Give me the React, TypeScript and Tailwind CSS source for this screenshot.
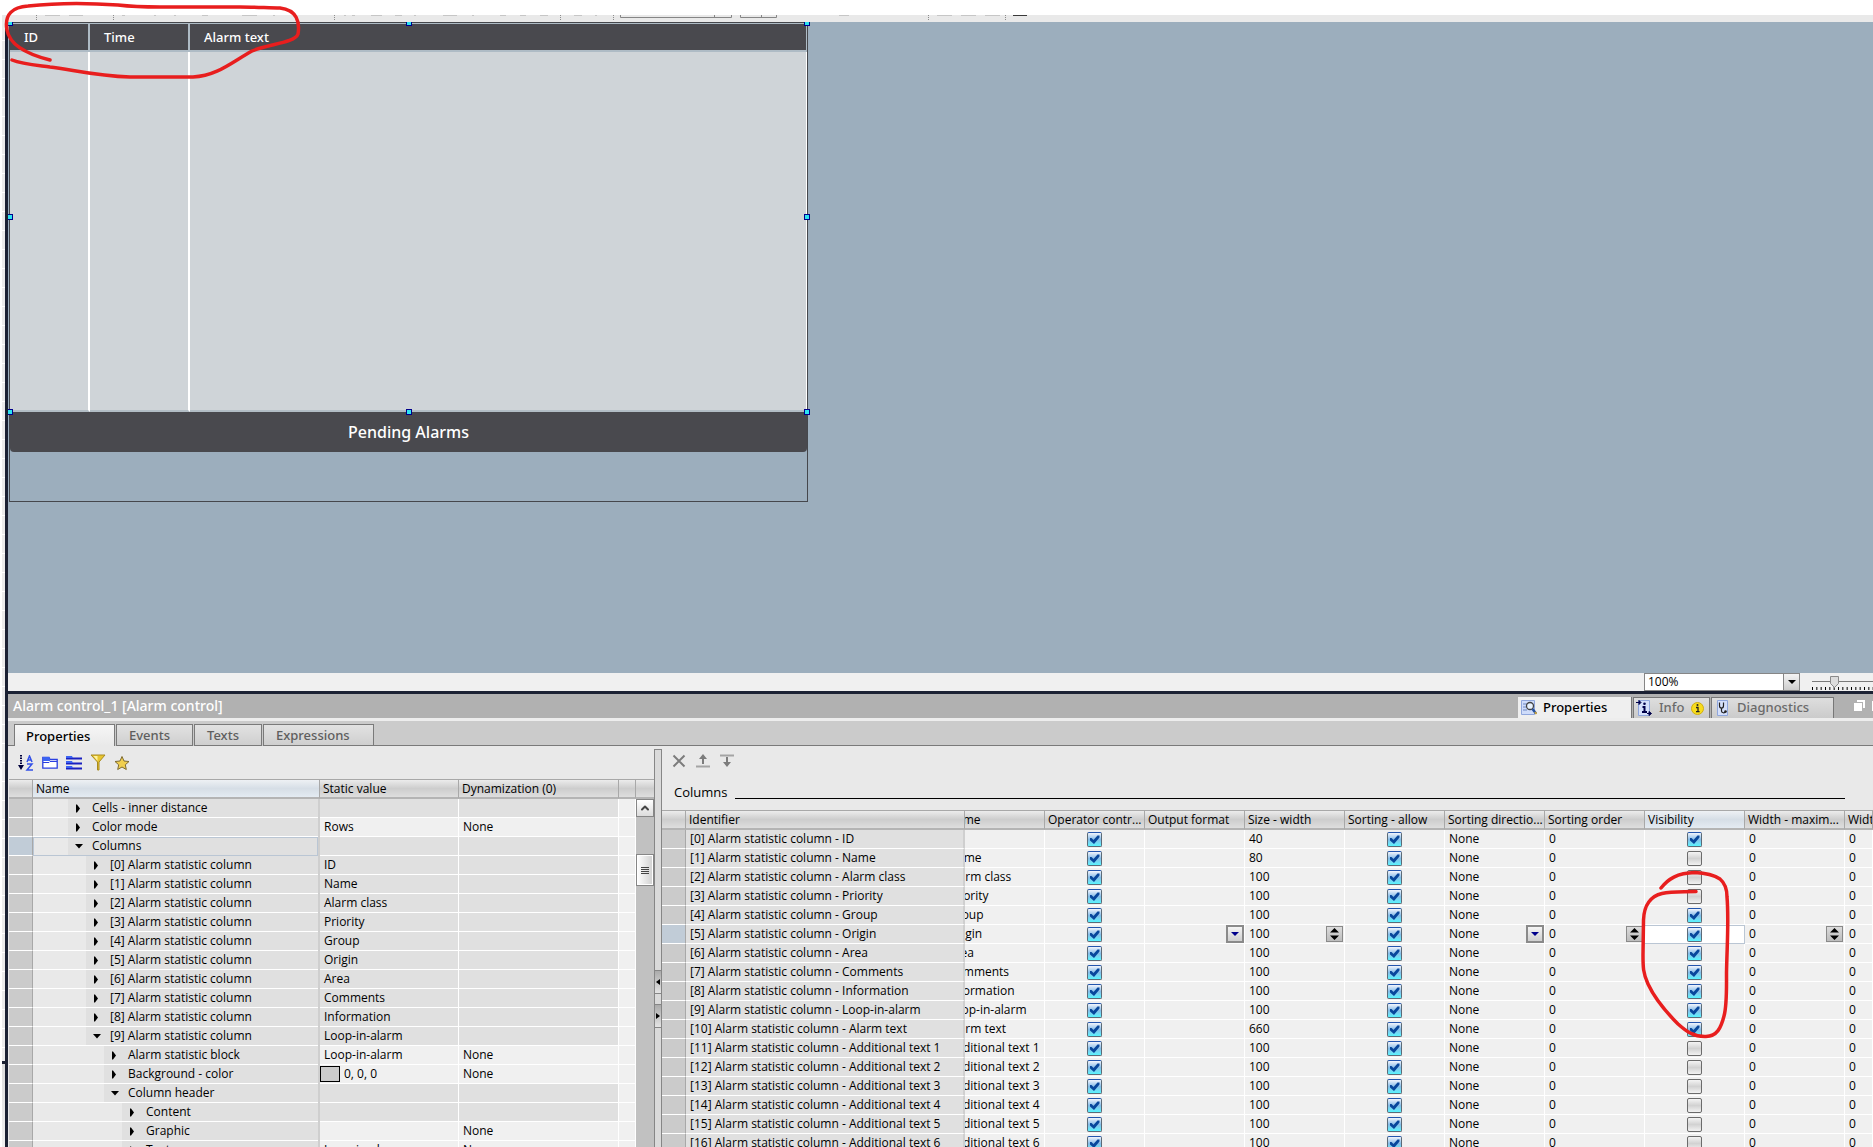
import { ChevronUp } from 'lucide-react';

type TreeRow = {
  level: number;
  name: string;
  value?: string;
  dynamic?: string;
  open?: boolean;
  editable?: boolean;
  selected?: boolean;
  swatch?: boolean;
};

const columnNames = [
  'ID', 'Name', 'Alarm class', 'Priority', 'Group', 'Origin', 'Area', 'Comments', 'Information', 'Loop-in-alarm', 'Alarm text',
  'Additional text 1', 'Additional text 2', 'Additional text 3', 'Additional text 4', 'Additional text 5', 'Additional text 6',
];

const treeRows: TreeRow[] = [
  { level: 0, name: 'Cells - inner distance' },
  { level: 0, name: 'Color mode', value: 'Rows', dynamic: 'None', editable: true },
  { level: 0, name: 'Columns', open: true, selected: true },
  ...columnNames.slice(0, 10).map((value, i) => ({
    level: 1,
    name: `[${i}] Alarm statistic column`,
    value,
    open: i === 9,
  })),
  { level: 2, name: 'Alarm statistic block', value: 'Loop-in-alarm', dynamic: 'None', editable: true },
  { level: 2, name: 'Background - color', value: '0, 0, 0', dynamic: 'None', editable: true, swatch: true },
  { level: 2, name: 'Column header', open: true },
  { level: 3, name: 'Content' },
  { level: 3, name: 'Graphic', dynamic: 'None', editable: true },
  { level: 3, name: 'Text', value: 'Loop-in-alarm', dynamic: 'None', editable: true },
];

const widths = ['40', '80', '100', '100', '100', '100', '100', '100', '100', '100', '660', '100', '100', '100', '100', '100', '100'];
const visible = [0, 4, 5, 6, 7, 8, 9, 10];
const activeRow = 5;

const indent = ['w-[35px]', 'w-[53px]', 'w-[71px]', 'w-[89px]'];

const head =
  'h-[20px] overflow-hidden whitespace-nowrap border-t border-b-2 border-r border-t-[#a8a8a8] border-b-[#b4b4b4] border-r-[#a8a8a8] bg-linear-to-b from-[#ececec] via-[#cdcdcd] to-[#dedede] pl-[3px] text-left font-normal leading-[17px]';
const headActive =
  'h-[20px] overflow-hidden whitespace-nowrap border-t border-b-2 border-r border-t-[#a8a8a8] border-b-[#b4b4b4] border-r-[#a8a8a8] bg-linear-to-b from-[#eef1f4] via-[#d6dee6] to-[#e4ebf2] pl-[3px] text-left font-normal leading-[17px]';
const cell = 'h-[19px] overflow-hidden whitespace-nowrap border-b border-r border-white bg-[#f0f0f0] pl-1 leading-[18px]';
const checkCell = 'h-[19px] border-b border-r border-white bg-[#f0f0f0] p-0';
const gutter = 'h-[19px] border-b border-r border-b-white border-r-[#a8a8a8] bg-[#cbcbcb]';
const gutterActive = 'h-[19px] border-b border-r border-b-white border-r-[#a8a8a8] bg-[#c1ccd7]';

function Expander({ open }: { open?: boolean }) {
  return (
    <svg viewBox="0 0 8 9" className="h-[9px] w-2">
      <path d={open ? 'M0 2h8L4 6.5z' : 'M1 0.5v8h1L5 4.5 2 .5z'} />
    </svg>
  );
}

function Check({ checked, label }: { checked: boolean; label: string }) {
  return (
    <label className="relative mx-auto block h-[15px] w-[15px]">
      <input
        type="checkbox"
        aria-label={label}
        defaultChecked={checked}
        className="peer block h-[15px] w-[15px] appearance-none rounded-[2px] border border-[#6b6b6b] bg-linear-to-b from-[#f4f4f4] via-[#d2d2d2] to-[#f2f2f2] checked:border-[#5b6b78] checked:border-t-[#2355ad] checked:from-[#f2f5fd] checked:via-[#86bce8] checked:to-[#55f5ff]"
      />
      <svg viewBox="0 0 15 15" className="pointer-events-none absolute inset-0 hidden h-[15px] w-[15px] peer-checked:block">
        <path d="M3 6h1.500L6.500 8 10.500 3.500H12.500V5.500L7 12 3 8.500z" fill="#08479c" />
      </svg>
    </label>
  );
}

function DropButton({ label }: { label: string }) {
  return (
    <button aria-label={label} className="flex h-[18px] w-[18px] shrink-0 items-center justify-center border-2 border-[#8a8a8a] bg-linear-to-b from-[#f4f4f4] to-[#cfcfcf]">
      <svg viewBox="0 0 8 4" className="h-1 w-2">
        <path d="M0 0h8L4 4z" fill="#00008b" />
      </svg>
    </button>
  );
}

function Spinner({ label }: { label: string }) {
  return (
    <button aria-label={label} className="flex h-4 w-[17px] shrink-0 items-center justify-center border border-[#8a8a8a] bg-linear-to-b from-[#dcdcdc] to-[#bcbcbc]">
      <svg viewBox="0 0 9 12" className="h-3 w-[9px]">
        <path d="M0 4.500L4.500 0 9 4.500zM0 7.500h9L4.500 12z" />
      </svg>
    </button>
  );
}

function Handle({ place }: { place: string }) {
  return <span className={`absolute h-[6px] w-[6px] -translate-x-1/2 -translate-y-1/2 border border-[#00008b] bg-[#2be4f0] ${place}`} />;
}

function ToolbarEdge() {
  const dots = [36, 113, 334, 560, 613, 928, 1005];
  const dashes = [
    [45, 15], [69, 14], [122, 3], [154, 2], [174, 2], [202, 6], [242, 15], [273, 2], [344, 2], [352, 3], [371, 11], [395, 7],
    [414, 2], [443, 14], [472, 2], [500, 6], [520, 6], [540, 8], [574, 8], [595, 2], [839, 10], [937, 15], [961, 15], [985, 15],
  ];
  return (
    <svg className="ml-[2px] block h-[7px] w-full bg-[#e9e9e9]">
      <g transform="translate(-2 0)">
        {dots.map((x) => (
          <path key={x} d={`M${x}.5 0v6`} stroke="#8c8c8c" strokeDasharray="1 1" />
        ))}
        {dashes.map(([x, w]) => (
          <path key={x} d={`M${x} .5h${w}`} stroke="#c6c6c6" />
        ))}
        <path d="M620.500 0v2.500h111V0M714.500 0v2M740.500 0v2.500h36V0M761.500 0v2" fill="none" stroke="#868686" />
        <path d="M1013 .5h14" stroke="#3a3a3a" />
      </g>
    </svg>
  );
}

function AlarmControl() {
  return (
    <div className="relative ml-px h-[480px] w-[799px] border border-[#45474c]">
      <table className="w-full table-fixed border-separate border-spacing-0 font-['Noto_Sans'] text-[13px] text-white">
        <colgroup>
          <col className="w-[80px]" />
          <col className="w-[100px]" />
          <col />
        </colgroup>
        <thead>
          <tr>
            {['ID', 'Time', 'Alarm text'].map((title) => (
              <th
                key={title}
                className="h-[29px] border-t border-r-2 border-b-2 border-[#aebbc5] bg-[#49494e] pl-[14px] text-left leading-5 font-medium last:border-r"
              >
                {title}
              </th>
            ))}
          </tr>
        </thead>
        <tbody>
          <tr>
            <td className="h-[360px] border-r-2 border-b-2 border-r-white border-b-[#b2bdc5] bg-[#cfd4d8]" />
            <td className="border-r-2 border-b-2 border-r-white border-b-[#b2bdc5] bg-[#cfd4d8]" />
            <td className="border-r border-b-2 border-r-white border-b-[#b2bdc5] bg-[#cfd4d8]" />
          </tr>
        </tbody>
      </table>
      <div className="flex h-10 items-center justify-center rounded-b bg-[#49494e] pb-px font-['Noto_Sans'] text-[16px] font-medium text-white">
        Pending Alarms
      </div>
      <Handle place="left-0 top-0" />
      <Handle place="left-1/2 top-0" />
      <Handle place="left-full top-0" />
      <Handle place="left-0 top-[194px]" />
      <Handle place="left-full top-[194px]" />
      <Handle place="left-0 top-[389px]" />
      <Handle place="left-1/2 top-[389px]" />
      <Handle place="left-full top-[389px]" />
    </div>
  );
}

function StatusRow() {
  return (
    <div className="flex h-[18px] shrink-0 items-center justify-end bg-[#f0f0f0]">
      <div className="relative mr-3 h-[18px] w-[156px]">
        <select aria-label="Zoom" className="block h-[18px] w-full appearance-none border border-[#868686] bg-white pl-[3px] text-[12px] leading-4">
          <option>100%</option>
        </select>
        <span className="pointer-events-none absolute top-0 right-0 flex h-[18px] w-[17px] items-center justify-center border border-[#868686] bg-linear-to-b from-[#f4f4f4] to-[#cdcdcd]">
          <svg viewBox="0 0 8 4" className="h-1 w-2">
            <path d="M0 0h8L4 4z" />
          </svg>
        </span>
      </div>
      <svg viewBox="0 0 61 18" className="h-[18px] w-[61px]">
        <path d="M0 8.500h61" stroke="#7a7a7a" />
        <path d="M0 15.500h61" stroke="#000" strokeWidth="3" strokeDasharray="1 3.333" />
        <path d="M18.500 3.500h8v7l-4 4-4-4z" fill="#dcdcdc" stroke="#8a8a8a" />
      </svg>
    </div>
  );
}

function TitleBar() {
  return (
    <div className="flex h-6 shrink-0 items-end bg-[#b1b1b1] font-['Noto_Sans'] text-[13px]">
      <h1 className="flex-1 self-center pl-[5px] text-[14px] leading-6 font-medium text-white">Alarm control_1 [Alarm control]</h1>
      <div className="flex gap-px pr-5 text-[#6a6a6a]">
        <button className="flex h-[21px] w-[114px] items-center gap-[6px] border-r border-r-[#777] bg-[#efefef] pl-[3px] font-medium text-black">
          <svg viewBox="0 0 16 16" className="h-4 w-4">
            <path d="M.5.5h13v14H.5z" fill="#cfdcfa" stroke="#8fa6dc" />
            <path d="M2 4h4M2 7h3M2 10h4" stroke="#6d86c0" />
            <circle cx="9" cy="6" r="3.500" fill="#e8f2ff" stroke="#444" strokeWidth="1.300" />
            <path d="M11.500 9l3.500 4.500" stroke="#2350a0" strokeWidth="2.500" />
            <path d="M14 12l1.500 2" stroke="#caa23a" strokeWidth="2" />
          </svg>
          Properties
        </button>
        <button className="flex h-[21px] w-[77px] items-center gap-[7px] border-x border-t border-[#777] bg-linear-to-b from-[#dedede] to-[#cbcbcb] pl-[2px] font-medium">
          <svg viewBox="0 0 16 16" className="h-4 w-4">
            <path d="M2.500.5h11v15h-11z" fill="#d5e0fb" stroke="#8fa6dc" />
            <path d="M0 2.500h4M3 .5v4l2-2zM11 13.500h3M13 11.500v4l2.500-2z" fill="#00004a" stroke="#00004a" />
            <path d="M6.500 7h2v5M6 12h5" fill="none" stroke="#00004a" strokeWidth="2" />
            <circle cx="8.500" cy="3.800" r="1.300" fill="#00004a" />
          </svg>
          Info
          <svg viewBox="0 0 13 13" className="h-[13px] w-[13px]">
            <circle cx="6.500" cy="6.500" r="6" fill="#f8dc1c" stroke="#cfae10" />
            <path d="M5 5.500h2v4M5 9.700h3.600" fill="none" stroke="#222" strokeWidth="1.300" />
            <circle cx="6.500" cy="3" r="1" fill="#222" />
          </svg>
        </button>
        <button className="flex h-[21px] w-[123px] items-center gap-[7px] border-x border-t border-[#777] bg-linear-to-b from-[#dedede] to-[#cbcbcb] pl-1 font-medium">
          <svg viewBox="0 0 14 16" className="h-4 w-[14px]">
            <path d="M1.500.5h10v15h-10z" fill="#d5e0fb" stroke="#8fa6dc" />
            <path d="M3.500 2.500v3c0 3.500 4 3.500 4 0v-3M5.500 8v3c0 2 3 2.500 4.500.500" fill="none" stroke="#222" strokeWidth="1.200" />
            <circle cx="9.500" cy="11.500" r="1.300" fill="#222" />
          </svg>
          Diagnostics
        </button>
      </div>
      <svg viewBox="0 0 19 12" className="mb-[6px] h-3 w-[19px]">
        <path d="M3 0h8v8H9V2H3zM0 3h8v8H0z" fill="#fff" />
        <path d="M18 1h1v10h-1z" fill="#fff" />
      </svg>
    </div>
  );
}

function TabStrip() {
  const tab =
    'h-[22px] border-x border-t border-b border-[#7a7a7a] bg-linear-to-b from-[#e2e2e2] to-[#cfcfcf] pl-3 text-left font-medium text-[#5e5e5e]';
  return (
    <nav className="flex h-7 shrink-0 items-end border-t-3 border-t-[#ededed] bg-[#cbcbcb] font-['Noto_Sans'] text-[13px] leading-5">
      <span className="h-full w-[6px] border-b border-[#7a7a7a]" />
      <button className="h-[22px] w-[101px] border-x border-t border-[#7a7a7a] bg-linear-to-b from-[#f6f6f6] to-[#e9e9e9] pl-[11px] text-left font-medium text-black">
        Properties
      </button>
      <button className={`${tab} ml-px w-[77px]`}>Events</button>
      <button className={`${tab} ml-px w-[68px]`}>Texts</button>
      <button className={`${tab} ml-px w-[111px]`}>Expressions</button>
      <span className="h-full flex-1 border-b border-[#7a7a7a]" />
    </nav>
  );
}

function PropertyToolbar() {
  return (
    <div className="flex h-[33px] items-center gap-2 pl-[10px]">
      <button aria-label="Sort alphabetically">
        <svg viewBox="0 0 16 16" className="h-4 w-4">
          <path d="M3 0v10" stroke="#00003c" strokeWidth="2" strokeDasharray="1.500 1" />
          <path d="M0 10h6l-3 5z" fill="#00003c" />
          <path d="M9 7l2.500-6L14 7M10 5h3M9 9h5l-5 6h6" fill="none" stroke="#3350e8" strokeWidth="1.500" />
        </svg>
      </button>
      <button aria-label="Show categories">
        <svg viewBox="0 0 16 16" className="h-4 w-4">
          <path d="M.8 13.200V2.500H7l1 2h7.200v8.700z" fill="#fff" stroke="#2a3fe0" strokeWidth="1.300" />
          <path d="M1 2h6l1 2v2H1z" fill="#3b63f2" />
          <path d="M1 7.500h6l1-1h7" fill="none" stroke="#2a3fe0" />
        </svg>
      </button>
      <button aria-label="Show list">
        <svg viewBox="0 0 16 16" className="h-4 w-4">
          <path d="M0 3.500h16M0 8.500h16M0 13.500h16" stroke="#1a20c0" strokeWidth="2" />
          <path d="M0 1h6l1 2H0zM0 6h6l1 2H0zM0 11h6l1 2H0z" fill="#3b63f2" />
        </svg>
      </button>
      <button aria-label="Filter">
        <svg viewBox="0 0 16 18" className="h-[18px] w-4">
          <path d="M1 1h14L9 8v8H7.500V8z" fill="#e9c62e" stroke="#a88a20" />
          <path d="M3.500 2l4 5V2z" fill="#fff3a0" />
        </svg>
      </button>
      <button aria-label="Favorites">
        <svg viewBox="0 0 16 16" className="h-4 w-4">
          <path d="M8 1.500l2 4.500 5 .5-3.700 3.300 1 4.700L8 12l-4.300 2.500 1-4.700L1 6.500 6 6z" fill="#f0cf50" stroke="#7d6a30" />
        </svg>
      </button>
    </div>
  );
}

function PropertyTree() {
  return (
    <section className="flex w-[646px] shrink-0 flex-col">
      <PropertyToolbar />
      <div className="flex min-h-0 flex-1 overflow-hidden pl-px">
        <table className="w-[627px] shrink-0 table-fixed border-separate border-spacing-0 self-start">
          <colgroup>
            <col className="w-[24px]" />
            <col className="w-[287px]" />
            <col className="w-[139px]" />
            <col className="w-[160px]" />
            <col className="w-[17px]" />
          </colgroup>
          <thead>
            <tr>
              <th className={head} />
              <th className={headActive}>Name</th>
              <th className={head}>Static value</th>
              <th className={head}>Dynamization (0)</th>
              <th className={head} />
            </tr>
          </thead>
          <tbody>
            {treeRows.map((row) => {
              const tone = row.editable ? cell : `${cell} bg-[#e0e0e0]!`;
              return (
                <tr key={row.name}>
                  <td className={row.selected ? gutterActive : gutter} />
                  <td className="h-[19px] border-r-2 border-r-[#cfcfcf] p-0">
                    <div
                      className={
                        row.selected
                          ? 'flex h-[19px] border-b border-white bg-[#e9e9e9] outline-1 -outline-offset-1 outline-[#bac6d4]'
                          : 'flex h-[19px] border-b border-white bg-[#e9e9e9]'
                      }
                    >
                      <span className={`${indent[row.level]} shrink-0`} />
                      <span className="flex flex-1 items-center bg-[#e0e0e0] pl-[7px] whitespace-nowrap">
                        <Expander open={row.open} />
                        <span className="pl-[9px] leading-[18px]">{row.name}</span>
                      </span>
                    </div>
                  </td>
                  <td className={tone}>
                    {row.swatch ? (
                      <span className="-ml-1 flex items-center gap-1">
                        <span className="h-4 w-5 border border-black bg-[#cbcbcb]" />
                        {row.value}
                      </span>
                    ) : (
                      row.value
                    )}
                  </td>
                  <td className={tone}>{row.dynamic}</td>
                  <td className={cell} />
                </tr>
              );
            })}
          </tbody>
        </table>
        <div className="flex flex-1 flex-col bg-[#c1c1c1]">
          <div className="h-[20px] border-t border-b-2 border-t-[#a8a8a8] border-b-[#b4b4b4] bg-linear-to-b from-[#ececec] via-[#cdcdcd] to-[#dedede]" />
          <button aria-label="Scroll up" className="flex h-[18px] items-center justify-center border border-[#868686] bg-linear-to-b from-white to-[#dcdcdc]">
            <ChevronUp className="h-3 w-3 text-[#444]" strokeWidth={4} />
          </button>
          <button aria-label="Scroll position" className="mt-[37px] flex h-8 flex-col items-center justify-center gap-px border border-[#868686] bg-linear-to-r from-white to-[#d0d0d0] outline-1 -outline-offset-2 outline-white">
            <span className="h-px w-2 bg-[#444]" />
            <span className="h-px w-2 bg-[#444]" />
            <span className="h-px w-2 bg-[#444]" />
            <span className="h-px w-2 bg-[#444]" />
          </button>
        </div>
      </div>
    </section>
  );
}

function Splitter() {
  return (
    <div className="mt-[3px] w-2 shrink-0 border-x border-t border-[#868686] bg-[#dadada] pt-[220px]">
      <button aria-label="Collapse left" className="flex h-6 w-full items-center justify-center border-y border-[#868686] bg-linear-to-b from-[#ababab] to-[#e4e4e4]">
        <svg viewBox="0 0 4 6" className="h-[6px] w-1">
          <path d="M4 0v6L0 3z" />
        </svg>
      </button>
      <button aria-label="Collapse right" className="mt-[10px] flex h-6 w-full items-center justify-center border-y border-[#868686] bg-linear-to-b from-[#ababab] to-[#e4e4e4]">
        <svg viewBox="0 0 4 6" className="h-[6px] w-1">
          <path d="M0 0v6l4-3z" />
        </svg>
      </button>
    </div>
  );
}

function ColumnsEditor() {
  return (
    <section className="min-w-0 flex-1">
      <div className="flex h-[30px] items-center gap-2 pl-[10px]">
        <button aria-label="Delete">
          <svg viewBox="0 0 14 14" className="h-[14px] w-[14px]">
            <path d="M1.500 1.500l11 11M12.500 1.500l-11 11" stroke="#7c7c7c" strokeWidth="2" />
          </svg>
        </button>
        <button aria-label="Move up" className="ml-[2px]">
          <svg viewBox="0 0 14 14" className="h-[14px] w-[14px]">
            <path d="M0 12.500h14" stroke="#a4a4a4" strokeWidth="2" />
            <path d="M3 5l4-5 4 5H8v5H6V5z" fill="#7c7c7c" />
          </svg>
        </button>
        <button aria-label="Move down" className="ml-[2px]">
          <svg viewBox="0 0 14 14" className="h-[14px] w-[14px]">
            <path d="M0 1.500h14" stroke="#a4a4a4" strokeWidth="2" />
            <path d="M3 8l4 5 4-5H8V3H6v5z" fill="#7c7c7c" />
          </svg>
        </button>
      </div>
      <div className="flex h-[34px] gap-2 pr-7 pl-3">
        <h2 className="pt-[6px] text-[13px] leading-5">Columns</h2>
        <span className="h-[23px] flex-1 border-b border-black" />
      </div>
      <div className="relative">
        <table className="w-full table-fixed border-separate border-spacing-0">
          <colgroup>
            <col className="w-[24px]" />
            <col className="w-[279px]" />
            <col className="w-[80px]" />
            <col className="w-[100px]" />
            <col className="w-[100px]" />
            <col className="w-[100px]" />
            <col className="w-[100px]" />
            <col className="w-[100px]" />
            <col className="w-[100px]" />
            <col className="w-[100px]" />
            <col className="w-[100px]" />
            <col />
          </colgroup>
          <thead>
            <tr>
              <th className={head} />
              <th className={head}>Identifier</th>
              <th className={head}>
                <span className="-ml-[3px] flex justify-end overflow-hidden">
                  <span className="w-[97px] shrink-0">Name</span>
                </span>
              </th>
              <th className={head}>Operator contr...</th>
              <th className={head}>Output format</th>
              <th className={head}>Size - width</th>
              <th className={head}>Sorting - allow</th>
              <th className={head}>Sorting directio...</th>
              <th className={head}>Sorting order</th>
              <th className={headActive}>Visibility</th>
              <th className={head}>Width - maxim...</th>
              <th className={head}>Width</th>
            </tr>
          </thead>
          <tbody>
            {columnNames.map((name, i) => {
              const active = i === activeRow;
              return (
                <tr key={name}>
                  <td className={active ? gutterActive : gutter} />
                  <td className="h-[19px] border-r-2 border-b border-r-[#cfcfcf] border-b-white bg-[#e0e0e0] pl-1 leading-[18px] whitespace-nowrap">
                    [{i}] Alarm statistic column - {name}
                  </td>
                  <td className="h-[19px] border-r border-b border-white bg-[#f0f0f0] p-0 leading-[18px] whitespace-nowrap">
                    <span className="flex justify-end overflow-hidden">
                      <span className="w-[96px] shrink-0">{i > 0 && name}</span>
                    </span>
                  </td>
                  <td className={checkCell}>
                    <Check checked label={`Operator control ${name}`} />
                  </td>
                  <td className={cell}>
                    {active && (
                      <span className="flex justify-end">
                        <DropButton label="Output format" />
                      </span>
                    )}
                  </td>
                  <td className={cell}>
                    <span className="flex items-center justify-between pr-px">
                      {widths[i]}
                      {active && <Spinner label="Size - width" />}
                    </span>
                  </td>
                  <td className={checkCell}>
                    <Check checked label={`Sorting allow ${name}`} />
                  </td>
                  <td className={cell}>
                    <span className="flex items-center justify-between">
                      None
                      {active && <DropButton label="Sorting direction" />}
                    </span>
                  </td>
                  <td className={cell}>
                    <span className="flex items-center justify-between pr-px">
                      0
                      {active && <Spinner label="Sorting order" />}
                    </span>
                  </td>
                  <td className={active ? 'h-[19px] border border-l-0 border-[#bac6d4] bg-white p-0' : checkCell}>
                    <Check checked={visible.includes(i)} label={`Visibility ${name}`} />
                  </td>
                  <td className={cell}>
                    <span className="flex items-center justify-between pr-px">
                      0
                      {active && <Spinner label="Width - maximum" />}
                    </span>
                  </td>
                  <td className={cell}>0</td>
                </tr>
              );
            })}
          </tbody>
        </table>
        <svg viewBox="1638 868 96 174" className="pointer-events-none absolute top-[58px] left-[976px] h-[174px] w-24">
          <path
            d="M1661 888C1668 879 1677 873 1695 872.500C1706 873 1714 875 1720 879C1726 884 1727 890 1727 897C1729 920 1727 945 1726.500 973C1726.500 990 1727 1005 1724 1016C1721 1028 1717 1036 1706 1036.500C1694 1037 1687 1032 1678 1024C1668 1014 1655 999 1648 984C1643 973 1643 967 1643 955L1643.500 920C1644 905 1651 896 1662 893.500C1672 891 1682 892 1696 891.500"
            fill="none"
            stroke="#e81e1e"
            strokeWidth="3.500"
            strokeLinecap="round"
          />
        </svg>
      </div>
    </section>
  );
}

export default function App() {
  return (
    <div className="relative flex h-screen flex-col overflow-hidden bg-white pt-[15px] font-['Open_Sans',sans-serif] text-[12px] text-black">
      <ToolbarEdge />
      <div className="flex min-h-0 flex-1">
        <div className="ml-[2px] flex w-[3px] shrink-0 flex-col">
          <div className="flex-1 bg-[repeating-linear-gradient(#ebebeb_0_18px,#ffffff_18px_19px)]" />
          <div className="h-[86px] border-t-3 border-t-[#1b2133] bg-linear-to-b from-[#dcdcdc] to-[#f0f0f0]" />
        </div>
        <div className="w-[3px] shrink-0 bg-[#1b2133]" />
        <main className="flex min-w-0 flex-1 flex-col">
          <div className="min-h-0 flex-1 overflow-hidden bg-[#9caebd]">
            <AlarmControl />
          </div>
          <StatusRow />
          <div className="flex h-[456px] shrink-0 flex-col border-t-3 border-t-[#1b2133] bg-[#e9e9e9]">
            <TitleBar />
            <TabStrip />
            <div className="flex min-h-0 flex-1 overflow-hidden">
              <PropertyTree />
              <Splitter />
              <ColumnsEditor />
            </div>
          </div>
        </main>
      </div>
      <svg viewBox="0 0 310 90" className="pointer-events-none absolute top-0 left-0 h-[90px] w-[310px]">
        <path
          d="M50 60C30 55 10 47 7 30C4 14 13 7 28 6C55 3 90 3 118 5C135 7 145 7 160 7L240 7C255 7 270 8 280 8C297 10 300 22 298 34C295 43 268 44 252 51C232 62 217 76 193 77L130 77C95 76 70 69 50 67C35 65 22 64 12 60"
          fill="none"
          stroke="#e81e1e"
          strokeWidth="3.500"
          strokeLinecap="round"
        />
      </svg>
    </div>
  );
}
